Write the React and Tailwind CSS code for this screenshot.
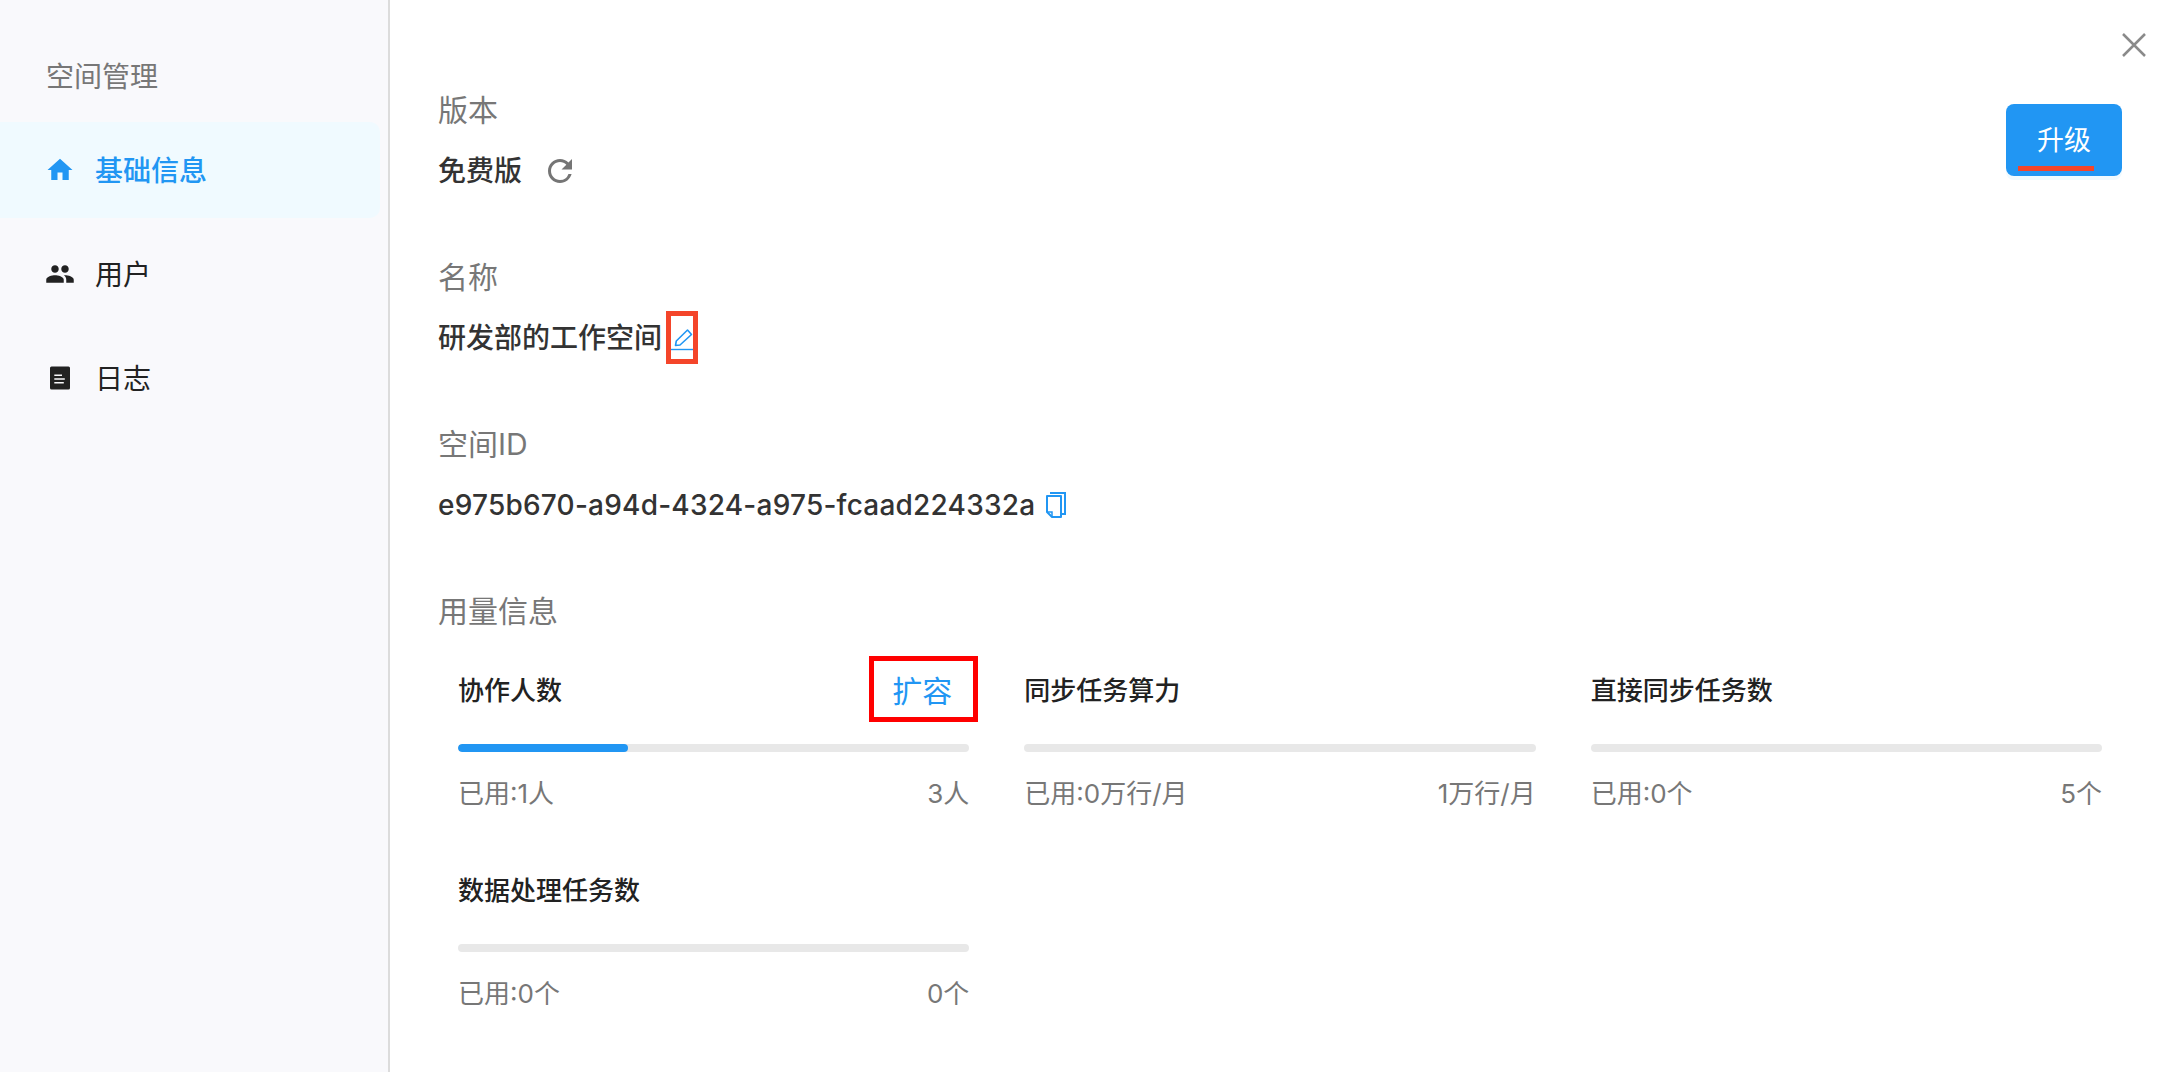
import React from 'react';
import { MdHome, MdPeople, MdRefresh } from 'react-icons/md';

const LogIcon = ({ size }) => (
  <svg width={size} height={size} viewBox="0 0 30 30">
    <rect x="5" y="3.500" width="20" height="23" rx="1.500" fill="#222" />
    <path d="M9.300 12.200h7.700M9.300 16h10.500M9.300 19.800h9.500" stroke="#f9f9fc" strokeWidth="1.500" />
  </svg>
);

const navItems = [
  { label: '基础信息', icon: MdHome, active: true },
  { label: '用户', icon: MdPeople },
  { label: '日志', icon: LogIcon },
];

const usage = [
  { title: '协作人数', used: '已用:1人', total: '3人', percent: 33.3, expand: true },
  { title: '同步任务算力', used: '已用:0万行/月', total: '1万行/月', percent: 0 },
  { title: '直接同步任务数', used: '已用:0个', total: '5个', percent: 0 },
  { title: '数据处理任务数', used: '已用:0个', total: '0个', percent: 0 },
];

const PencilIcon = () => (
  <svg className="mt-[3px]" width="22" height="24" viewBox="0 0 22 24" fill="none" stroke="#2196f3" strokeWidth="1.6">
    <path d="M4.500 18.500l.8-4.500L16.500 3l4 4.500L9 18z" strokeLinejoin="round" />
    <path d="M0 22.500h22" strokeWidth="1.400" />
  </svg>
);

const CopyIcon = () => (
  <svg width="20" height="26" viewBox="0 0 20 26" fill="none" stroke="#2196f3" strokeWidth="2">
    <path d="M4 1h15v21h-3" />
    <path d="M1 4h14v21H6l-5-5z" strokeLinejoin="round" />
    <path d="M1 20h5v5" strokeWidth="1.500" />
  </svg>
);

const UsageCard = ({ title, used, total, percent, expand }) => (
  <div className="h-[200px] pt-[12px]">
    <div className="relative h-[40px] flex items-center text-[26px] font-medium text-[#222]">
      {title}
      {expand && (
        <span className="absolute right-[-9px] top-[-14px] w-[109px] h-[66px] pt-[4px] pr-[3px] border-[5px] border-[#ff0000] flex items-center justify-center text-[30px] font-normal text-[#2196f3]">
          扩容
        </span>
      )}
    </div>
    <div className="mt-[34px] h-[8px] rounded-full bg-[#e8e8e8] overflow-hidden">
      <div className="h-full rounded-full bg-[#2196f3]" style={{ width: `${percent}%` }} />
    </div>
    <div className="mt-[22px] flex justify-between text-[26px] leading-[40px] text-[#777]">
      <span>{used}</span>
      <span>{total}</span>
    </div>
  </div>
);

export default function App() {
  return (
    <div className="relative flex h-[1072px] overflow-hidden bg-white font-['Inter','Noto_Sans_CJK_SC',sans-serif]">
      <aside className="w-[390px] shrink-0 bg-[#f9f9fc] border-r-2 border-[#dcdcdc] pr-[8px]">
        <div className="pt-[57px] pl-[46px] text-[28px] leading-[40px] text-[#777]">空间管理</div>
        <nav className="mt-[25px] flex flex-col gap-[8px]">
          {navItems.map((item) => {
            const Icon = item.icon;
            return (
              <div
                key={item.label}
                className={
                  item.active
                    ? 'h-[96px] flex items-center pl-[45px] gap-[20px] rounded-r-[10px] bg-[#f0faff] text-[#2196f3] font-medium text-[28px]'
                    : 'h-[96px] flex items-center pl-[45px] gap-[20px] text-[#222] text-[28px]'
                }
              >
                <Icon size={30} />
                <span className="pt-[1px]">{item.label}</span>
              </div>
            );
          })}
        </nav>
      </aside>

      <main className="flex-1 pl-[48px] pr-[46px] pt-[89px]">
        <section className="flex justify-between items-start h-[102px]">
          <div>
            <div className="text-[30px] leading-[42px] text-[#777]">版本</div>
            <div className="mt-[20px] flex items-center gap-[20px] h-[40px] text-[28px] font-medium text-[#333]">
              免费版
              <MdRefresh size={36} className="text-[#757575]" />
            </div>
          </div>
          <button className="relative mt-[15px] w-[116px] h-[72px] rounded-[8px] bg-[#2196f3] text-white text-[27px] shadow-[0_4px_0_#f0faff]">
            <span className="relative top-[1px]">升级</span>
            <span className="absolute left-[12px] bottom-[5px] w-[76px] h-[5px] bg-[#f4452a]" />
          </button>
        </section>

        <section className="mt-[65px]">
          <div className="text-[30px] leading-[42px] text-[#777]">名称</div>
          <div className="mt-[20px] flex items-center h-[40px] text-[28px] font-medium text-[#333]">
            研发部的工作空间
            <span className="ml-[4px] mb-[2px] w-[32px] h-[53px] border-[5px] border-[#f4452a] flex items-center justify-center">
              <PencilIcon />
            </span>
          </div>
        </section>

        <section className="mt-[65px]">
          <div className="text-[30px] leading-[42px] text-[#777]">空间ID</div>
          <div className="mt-[20px] flex items-center gap-[11px] h-[40px] text-[28px] font-medium text-[#333]">
            <span className="tracking-[0.22px]">e975b670-a94d-4324-a975-fcaad224332a</span>
            <CopyIcon />
          </div>
        </section>

        <section className="mt-[65px]">
          <div className="text-[30px] leading-[42px] text-[#777]">用量信息</div>
          <div className="mt-[26px] px-[20px] grid grid-cols-3 gap-x-[55px]">
            {usage.map((item) => (
              <UsageCard key={item.title} {...item} />
            ))}
          </div>
        </section>
      </main>

      <svg className="absolute right-[22px] top-[33px]" width="24" height="24" viewBox="0 0 24 24" stroke="#8a8a8a" strokeWidth="2.500">
        <path d="M1 1l22 22M23 1L1 23" />
      </svg>
    </div>
  );
}
